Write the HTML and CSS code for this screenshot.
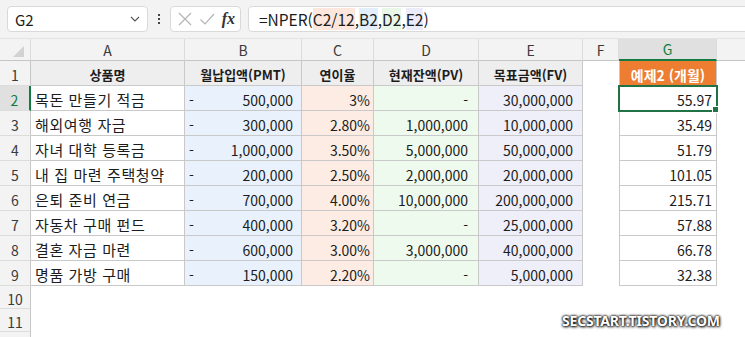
FILE: index.html
```html
<!DOCTYPE html>
<html lang="ko">
  <head>
    <meta charset="UTF-8" />
    <title>NPER 예제</title>
    <link rel="stylesheet" href="styles.css">
  </head>
  <body>
    <header class="topbar">
      <div class="namebox">
        <span>G2</span>
        <svg class="chevron" width="10" height="6" viewBox="0 0 10 6"><path d="M1 1 L5 5 L9 1" fill="none" stroke="#555" stroke-width="1.1"/></svg>
      </div>
      <div class="more"><i></i><i></i><i></i></div>
      <div class="fxbox">
        <svg width="16" height="16" viewBox="0 0 16 16"><path d="M2 2 L14 14 M14 2 L2 14" stroke="#b4b4b4" stroke-width="1.2"/></svg>
        <svg width="16" height="16" viewBox="0 0 16 16"><path d="M1.5 8.5 L6 13 L15 3" fill="none" stroke="#b4b4b4" stroke-width="1.2"/></svg>
        <span class="fx">fx</span>
      </div>
      <div class="formula">
        =NPER(<span class="ref-c">C2/12</span>,<span class="ref-b">B2</span>,<span class="ref-d">D2</span>,<span class="ref-e">E2</span>)
      </div>
    </header>

    <main class="sheet">
      <div class="ch corner"><span class="tri"></span></div>
      <div class="ch">A</div>
      <div class="ch">B</div>
      <div class="ch">C</div>
      <div class="ch">D</div>
      <div class="ch">E</div>
      <div class="ch">F</div>
      <div class="ch sel">G</div>
      <div class="ch blank"></div>

      <div class="rh">1</div>
      <div class="c head">상품명</div>
      <div class="c head">월납입액(PMT)</div>
      <div class="c head">연이율</div>
      <div class="c head">현재잔액(PV)</div>
      <div class="c head">목표금액(FV)</div>
      <div class="c empty"></div>
      <div class="c g title">예제2 (개월)</div>
      <div class="c empty"></div>

      <div class="rh sel">2</div>
      <div class="c name">목돈 만들기 적금</div>
      <div class="c pmt"><span>-</span><span>500,000</span></div>
      <div class="c rate">3%</div>
      <div class="c pv">-</div>
      <div class="c fv">30,000,000</div>
      <div class="c empty"></div>
      <div class="c g num active">55.97</div>
      <div class="c empty"></div>

      <div class="rh">3</div>
      <div class="c name">해외여행 자금</div>
      <div class="c pmt"><span>-</span><span>300,000</span></div>
      <div class="c rate">2.80%</div>
      <div class="c pv">1,000,000</div>
      <div class="c fv">10,000,000</div>
      <div class="c empty"></div>
      <div class="c g num">35.49</div>
      <div class="c empty"></div>

      <div class="rh">4</div>
      <div class="c name">자녀 대학 등록금</div>
      <div class="c pmt"><span>-</span><span>1,000,000</span></div>
      <div class="c rate">3.50%</div>
      <div class="c pv">5,000,000</div>
      <div class="c fv">50,000,000</div>
      <div class="c empty"></div>
      <div class="c g num">51.79</div>
      <div class="c empty"></div>

      <div class="rh">5</div>
      <div class="c name">내 집 마련 주택청약</div>
      <div class="c pmt"><span>-</span><span>200,000</span></div>
      <div class="c rate">2.50%</div>
      <div class="c pv">2,000,000</div>
      <div class="c fv">20,000,000</div>
      <div class="c empty"></div>
      <div class="c g num">101.05</div>
      <div class="c empty"></div>

      <div class="rh">6</div>
      <div class="c name">은퇴 준비 연금</div>
      <div class="c pmt"><span>-</span><span>700,000</span></div>
      <div class="c rate">4.00%</div>
      <div class="c pv">10,000,000</div>
      <div class="c fv">200,000,000</div>
      <div class="c empty"></div>
      <div class="c g num">215.71</div>
      <div class="c empty"></div>

      <div class="rh">7</div>
      <div class="c name">자동차 구매 펀드</div>
      <div class="c pmt"><span>-</span><span>400,000</span></div>
      <div class="c rate">3.20%</div>
      <div class="c pv">-</div>
      <div class="c fv">25,000,000</div>
      <div class="c empty"></div>
      <div class="c g num">57.88</div>
      <div class="c empty"></div>

      <div class="rh">8</div>
      <div class="c name">결혼 자금 마련</div>
      <div class="c pmt"><span>-</span><span>600,000</span></div>
      <div class="c rate">3.00%</div>
      <div class="c pv">3,000,000</div>
      <div class="c fv">40,000,000</div>
      <div class="c empty"></div>
      <div class="c g num">66.78</div>
      <div class="c empty"></div>

      <div class="rh">9</div>
      <div class="c name">명품 가방 구매</div>
      <div class="c pmt"><span>-</span><span>150,000</span></div>
      <div class="c rate">2.20%</div>
      <div class="c pv">-</div>
      <div class="c fv">5,000,000</div>
      <div class="c empty"></div>
      <div class="c g num">32.38</div>
      <div class="c empty"></div>

      <div class="rh short">10</div>
      <div class="c empty wide"></div>

      <div class="rh short">11</div>
      <div class="c empty wide"></div>

      <div class="rh short"></div>
      <div class="c empty wide"></div>
    </main>

    <div class="watermark">SECSTART.TISTORY.COM</div>
  </body>
</html>
```

FILE: styles.css
```css
body {
  margin: 0;
  width: 745px;
  height: 337px;
  overflow: hidden;
  position: relative;
  font-family: "Noto Sans CJK KR", "Noto Sans", sans-serif;
  color: #1c1c1c;
  background-color: #fff;
}

/* formula bar */
.topbar {
  display: flex;
  align-items: center;
  height: 39px;
  padding-left: 7px;
  box-sizing: border-box;
  background-color: #f3f3f3;
  border-bottom: 1px solid #e3e3e3;
}

.namebox,
.fxbox,
.formula {
  height: 26px;
  box-sizing: border-box;
  background-color: #fff;
  border: 1px solid #d9d9d9;
  border-radius: 4px;
}

.namebox {
  width: 141px;
  display: flex;
  align-items: center;
  justify-content: space-between;
  padding: 0 7px 0 7px;
  font-size: 15px;
}

.more {
  width: 22px;
  display: flex;
  flex-direction: column;
  align-items: center;
  gap: 2px;
}

.more i {
  width: 2px;
  height: 2px;
  background-color: #444;
}

.fxbox {
  width: 71px;
  display: flex;
  align-items: center;
  justify-content: space-between;
  padding: 0 5px 0 6px;
}

.fx {
  font-family: "Liberation Serif", serif;
  font-style: italic;
  font-weight: bold;
  font-size: 16px;
  color: #333;
}

.formula {
  flex: 1;
  margin-left: 7px;
  margin-right: -6px;
  padding-left: 10px;
  font-size: 15.5px;
  line-height: 24px;
  white-space: nowrap;
  overflow: hidden;
}

.ref-c { background-color: #fde7dc; }
.ref-b { background-color: #e2eefb; }
.ref-d { background-color: #e8f7e8; }
.ref-e { background-color: #ebebfa; }

/* grid */
.sheet {
  display: grid;
  grid-template-columns: 31px 154px 117px 72px 105px 104px 36px 98px 28px;
  grid-template-rows: 22px repeat(9, 25px) 23px 23px 10px;
}

.sheet > div {
  box-sizing: border-box;
  display: flex;
  align-items: center;
  white-space: nowrap;
  overflow: hidden;
}

.ch {
  justify-content: center;
  background-color: #f3f3f3;
  border-right: 1px solid #dcdcdc;
  border-bottom: 1px solid #c6c6c6;
  font-size: 14px;
  color: #3a3a3a;
}

.ch.blank {
  border-right: none;
}

.ch.sel {
  background-color: #e0e0e0;
  color: #107c41;
  border-bottom: 2px solid #107c41;
}

.tri {
  width: 0;
  height: 0;
  border-left: 11px solid transparent;
  border-bottom: 11px solid #d2d2d2;
  margin: 4px 0 0 6px;
}

.rh {
  justify-content: center;
  background-color: #f3f3f3;
  border-right: 1px solid #c6c6c6;
  border-bottom: 1px solid #dcdcdc;
  font-size: 14px;
  color: #3a3a3a;
  padding-top: 3px;
}

.rh.sel {
  background-color: #e0e0e0;
  color: #107c41;
  border-right: 2px solid #107c41;
}

.c {
  border-right: 1px solid #c9c9c9;
  border-bottom: 1px solid #c9c9c9;
  font-size: 14px;
  padding-top: 3px;
}

.c.empty {
  border: none;
}

.c.wide {
  grid-column: 2 / span 8;
}

.head {
  justify-content: center;
  font-size: 13px;
  font-weight: bold;
  background-color: #eeeeee;
}

.name {
  font-size: 15px;
  letter-spacing: 0.6px;
  padding-left: 4px;
}

.pmt {
  justify-content: space-between;
  padding: 3px 8px 0 4px;
  background-color: #e9f2fc;
}

.rate {
  justify-content: flex-end;
  padding-right: 3px;
  background-color: #fdece4;
}

.pv {
  justify-content: flex-end;
  padding-right: 10px;
  background-color: #effaef;
}

.fv {
  justify-content: flex-end;
  padding-right: 9px;
  background-color: #efeffa;
}

.g {
  border-left: 1px solid #c9c9c9;
}

.title {
  justify-content: center;
  font-size: 14px;
  font-weight: bold;
  color: #fff;
  background-color: #ed7d31;
}

.num {
  justify-content: flex-end;
  padding-right: 4px;
}

.active {
  position: relative;
  overflow: visible !important;
  outline: 2px solid #217346;
  outline-offset: -1px;
  z-index: 1;
}

.active::after {
  content: "";
  position: absolute;
  right: -3px;
  bottom: -3px;
  width: 5px;
  height: 5px;
  background-color: #217346;
  border: 1px solid #fff;
}

.watermark {
  position: absolute;
  left: 562px;
  top: 311px;
  font-family: "Noto Sans", sans-serif;
  font-weight: bold;
  font-size: 14px;
  letter-spacing: -0.2px;
  color: #fff;
  text-shadow: 0 0 2px #000, 0 0 3px #000, 1px 1px 3px #333;
}
```
